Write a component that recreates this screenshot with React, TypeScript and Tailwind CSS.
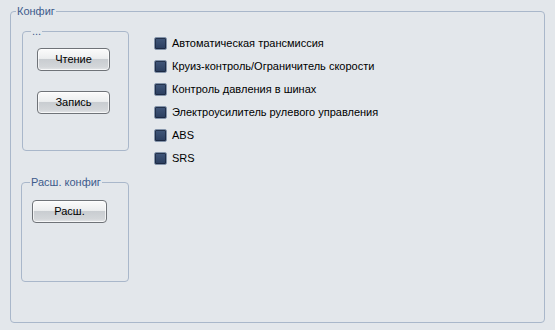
import React from 'react';

const options = [
    'Автоматическая трансмиссия',
    'Круиз-контроль/Ограничитель скорости',
    'Контроль давления в шинах',
    'Электроусилитель рулевого управления',
    'ABS',
    'SRS',
];

function GlossButton({ label, width }: { label: string; width: string }) {
    return (
        <button
            type="button"
            className={`${width} h-[23px] rounded-[4px] border border-[#6f7378] text-[11px] text-black shadow-[inset_0_0_0_1px_rgba(255,255,255,0.7)] bg-[linear-gradient(to_bottom,#fbfbfb_0%,#eceeef_45%,#c9cdd1_50%,#d3d6d9_85%,#e4e6e8_100%)]`}
        >
            {label}
        </button>
    );
}

function Checkbox({ label }: { label: string }) {
    return (
        <label className="flex items-center h-[23px] gap-[5px]">
            <span className="w-[13px] h-[13px] rounded-[2px] border border-[#8494aa] bg-[linear-gradient(to_bottom,#41577a,#2a3d5e)] shadow-[inset_0_0_0_1px_rgba(20,30,50,0.6)]" />
            <span className="text-[11px] text-black leading-none">{label}</span>
        </label>
    );
}

export default function App() {
    return (
        <div
            className="w-[555px] h-[330px] bg-[#e3e7eb] pt-[4px] pl-[10px]"
            style={{ fontFamily: '"Liberation Sans", Arial, sans-serif' }}
        >
            <fieldset className="w-[535px] h-[319px] border border-[#a9b7ca] rounded-[4px]">
                <legend className="ml-[5px] px-px text-[11px] leading-[14px] text-[#3d5b8c]">Конфиг</legend>
                <div className="flex">
                    <div className="flex flex-col">
                        <fieldset className="mt-[6px] ml-[11px] w-[107px] h-[127px] border border-[#a9b7ca] rounded-[4px]">
                            <legend className="ml-[8px] px-px text-[11px] leading-[14px] text-[#3d5b8c]">...</legend>
                            <div className="flex flex-col items-start pl-[14px] pt-[10px] gap-[20px]">
                                <GlossButton label="Чтение" width="w-[73px]" />
                                <GlossButton label="Запись" width="w-[73px]" />
                            </div>
                        </fieldset>
                        <fieldset className="mt-[24px] ml-[10px] w-[108px] h-[107px] border border-[#a9b7ca] rounded-[4px]">
                            <legend className="ml-[8px] px-px text-[11px] leading-[14px] text-[#3d5b8c]">Расш. конфиг</legend>
                            <div className="pl-[10px] pt-[9px]">
                                <GlossButton label="Расш." width="w-[75px]" />
                            </div>
                        </fieldset>
                    </div>
                    <div className="flex flex-col mt-[14px] ml-[25px]">
                        {options.map((o) => (
                            <Checkbox key={o} label={o} />
                        ))}
                    </div>
                </div>
            </fieldset>
        </div>
    );
}
